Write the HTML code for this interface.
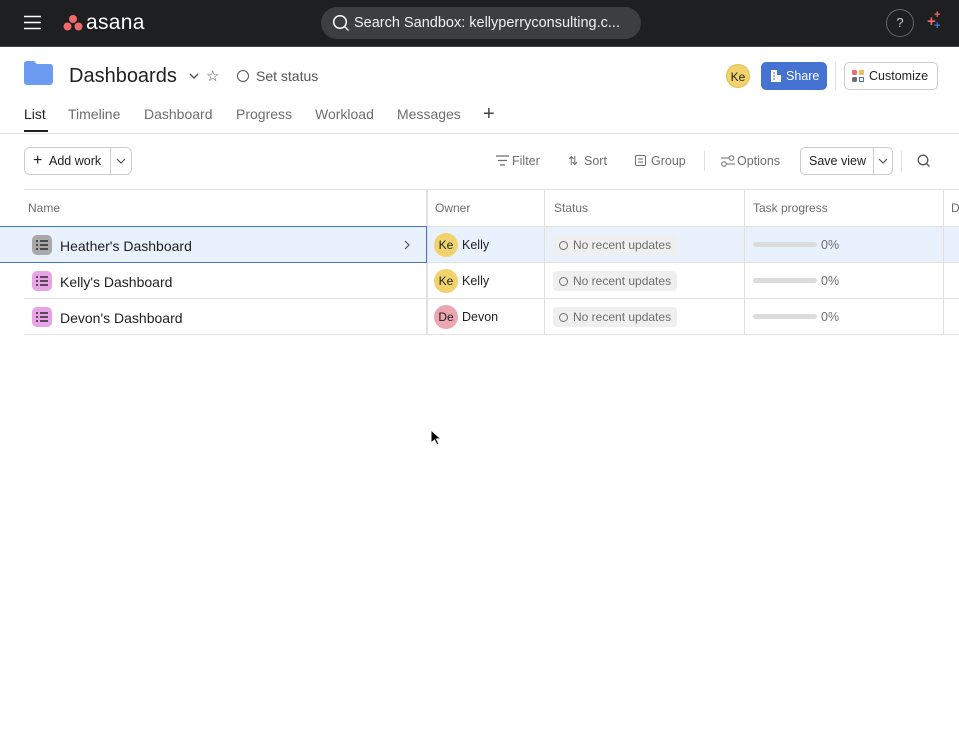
<!DOCTYPE html>
<html><head><meta charset="utf-8"><style>
*{box-sizing:border-box;margin:0;padding:0}
body{width:959px;height:754px;overflow:hidden;background:#fff;font-family:"Liberation Sans",sans-serif;color:#1e1f21;position:relative}
.abs{position:absolute}
.top{left:0;top:0;width:959px;height:47px;background:#1e1f21;border-bottom:1px solid #444}
.tab{top:106px;font-size:14px;color:#6d6e6f}
.hdr{top:201px;font-size:12px;color:#6d6e6f}
.vl{width:1px;background:#e0e0e0}
.hl{height:1px;background:#e0e0e0}
.av{width:24px;height:24px;border-radius:50%;font-size:12px;line-height:24px;text-align:center;color:#1e1f21}
.pill{height:20px;background:#efefef;border-radius:4px;font-size:12px;color:#6d6e6f;line-height:20px;padding:0 6px 0 6px}
.pill i{display:inline-block;width:9px;height:9px;border:1.3px solid #6d6e6f;border-radius:50%;margin-right:5px;vertical-align:-1px}
.bar{width:64px;height:5px;border-radius:3px;background:#dcdcdc}
.ic{width:20px;height:20px;border-radius:5px}
.tb{top:154px;font-size:12.5px;color:#6d6e6f}
</style></head><body>
<div class="abs top"></div>
<svg class="abs" style="left:24px;top:15px" width="17" height="15"><path d="M0 1.5h17M0 7.5h17M0 13.5h17" stroke="#fff" stroke-width="1.6"/></svg>
<svg class="abs" style="left:63px;top:14px" width="20" height="18"><circle cx="10" cy="5" r="4" fill="#f06a6a"/><circle cx="4.5" cy="12.5" r="4" fill="#f06a6a"/><circle cx="15.5" cy="12.5" r="4" fill="#f06a6a"/></svg>
<div class="abs" style="left:86px;top:11px;font-size:21px;color:#fff;letter-spacing:0.3px">asana</div>
<div class="abs" style="left:321px;top:7px;width:320px;height:32px;background:#3d3e40;border-radius:16px"></div>
<svg class="abs" style="left:332px;top:14px" width="18" height="18"><circle cx="8" cy="8" r="6.3" stroke="#fff" stroke-width="1.5" fill="none"/><path d="M12.5 12.5l4 4" stroke="#fff" stroke-width="1.5"/></svg>
<div class="abs" style="left:354px;top:15px;font-size:14.5px;color:#f0f0f0">Search Sandbox: kellyperryconsulting.c...</div>
<div class="abs" style="left:886px;top:9px;width:28px;height:28px;border:1px solid #666;border-radius:50%;color:#ccc;font-size:13px;text-align:center;line-height:26px">?</div>
<div class="abs" style="left:927px;top:14px;color:#f06a6a;font-size:15px;line-height:1;font-weight:bold">+</div>
<div class="abs" style="left:934px;top:10px;color:#f06a6a;font-size:11px;line-height:1;font-weight:bold">+</div>
<div class="abs" style="left:934px;top:21px;color:#4573d2;font-size:11px;line-height:1;font-weight:bold">+</div>

<svg class="abs" style="left:24px;top:61px" width="29" height="24"><path d="M0 3a3 3 0 0 1 3-3h7l3 3h13a3 3 0 0 1 3 3v15a3 3 0 0 1-3 3H3a3 3 0 0 1-3-3z" fill="#6d9bf1"/></svg>
<div class="abs" style="left:69px;top:65px;font-size:20px;font-weight:500">Dashboards</div>
<svg class="abs" style="left:189px;top:73px" width="10" height="7"><path d="M1 1l4 4 4-4" stroke="#555" stroke-width="1.4" fill="none"/></svg>
<div class="abs" style="left:206px;top:67px;font-size:15px;color:#555">☆</div>
<div class="abs" style="left:237px;top:70px;width:12px;height:12px;border:1.4px solid #555;border-radius:50%"></div>
<div class="abs" style="left:256px;top:68px;font-size:14px;color:#555">Set status</div>

<div class="abs av" style="left:726px;top:64px;background:#f1d26b;border:1px solid #e0c050">Ke</div>
<div class="abs" style="left:761px;top:62px;width:66px;height:28px;background:#4573d2;border-radius:5px;color:#fff;font-size:12.5px;line-height:28px;padding-left:25px">Share</div>
<svg class="abs" style="left:770px;top:70px" width="12" height="12"><path d="M1 0h6v12H1zM7 5h4v7H7z" fill="#fff"/><path d="M3 3h2M3 6h2M3 9h2" stroke="#4573d2"/></svg>
<div class="abs vl" style="left:835px;top:62px;height:28px"></div>
<div class="abs" style="left:844px;top:62px;width:94px;height:28px;border:1px solid #cfcbcb;border-radius:5px;font-size:12.5px;line-height:26px;padding-left:24px">Customize</div>
<svg class="abs" style="left:852px;top:70px" width="13" height="13"><rect x="0" y="0" width="5" height="5" rx="1.5" fill="#f06a6a"/><rect x="7" y="0" width="5" height="5" rx="1" fill="#e8c24f"/><rect x="0" y="7" width="5" height="5" rx="1.5" fill="#6d6e6f"/><rect x="7.5" y="7.5" width="4" height="4" fill="none" stroke="#4573d2"/></svg>

<div class="abs tab" style="left:24px;color:#1e1f21;font-weight:500">List</div>
<div class="abs" style="left:24px;top:130px;width:24px;height:2px;background:#1e1f21"></div>
<div class="abs tab" style="left:68px">Timeline</div>
<div class="abs tab" style="left:144px">Dashboard</div>
<div class="abs tab" style="left:236px">Progress</div>
<div class="abs tab" style="left:315px">Workload</div>
<div class="abs tab" style="left:397px">Messages</div>
<div class="abs" style="left:483px;top:103px;font-size:20px;color:#444">+</div>
<div class="abs hl" style="left:0;top:133px;width:959px"></div>

<div class="abs" style="left:24px;top:147px;width:108px;height:28px;border:1px solid #cfcbcb;border-radius:6px"></div>
<div class="abs vl" style="left:110px;top:148px;height:26px;background:#cfcbcb"></div>
<div class="abs" style="left:33px;top:152px;font-size:16px">+</div>
<div class="abs" style="left:49px;top:154px;font-size:12.5px">Add work</div>
<svg class="abs" style="left:116px;top:158px" width="10" height="6"><path d="M1 1l4 4 4-4" stroke="#555" stroke-width="1.2" fill="none"/></svg>

<svg class="abs" style="left:496px;top:155px" width="13" height="11"><path d="M0 1h13M2 5.5h9M4 10h5" stroke="#6d6e6f" stroke-width="1.2"/></svg>
<div class="abs tb" style="left:512px">Filter</div>
<div class="abs tb" style="left:568px;font-size:12px">⇅</div>
<div class="abs tb" style="left:584px">Sort</div>
<svg class="abs" style="left:635px;top:155px" width="11" height="11"><rect x=".5" y=".5" width="10" height="10" rx="1.5" fill="none" stroke="#6d6e6f"/><path d="M3 4h5M3 7h5" stroke="#6d6e6f"/></svg>
<div class="abs tb" style="left:651px">Group</div>
<div class="abs vl" style="left:704px;top:151px;height:20px"></div>
<svg class="abs" style="left:721px;top:155px" width="14" height="12"><circle cx="10.5" cy="3" r="2.3" fill="none" stroke="#6d6e6f"/><circle cx="3" cy="9" r="2.3" fill="none" stroke="#6d6e6f"/><path d="M0 3h8M5 9h9" stroke="#6d6e6f"/></svg>
<div class="abs tb" style="left:737px">Options</div>
<div class="abs" style="left:800px;top:147px;width:93px;height:28px;border:1px solid #cfcbcb;border-radius:5px"></div>
<div class="abs vl" style="left:873px;top:148px;height:26px;background:#cfcbcb"></div>
<div class="abs" style="left:809px;top:154px;font-size:12.5px">Save view</div>
<svg class="abs" style="left:878px;top:158px" width="10" height="6"><path d="M1 1l4 4 4-4" stroke="#555" stroke-width="1.2" fill="none"/></svg>
<div class="abs vl" style="left:901px;top:151px;height:20px"></div>
<svg class="abs" style="left:917px;top:154px" width="14" height="14"><circle cx="6" cy="6" r="4.8" stroke="#555" stroke-width="1.3" fill="none"/><path d="M9.5 9.5l3 3" stroke="#555" stroke-width="1.3"/></svg>

<!-- table -->
<div class="abs hl" style="left:24px;top:189px;width:935px"></div>
<div class="abs" style="left:0;top:227px;width:959px;height:35px;background:#e9f1fc"></div>
<div class="abs hl" style="left:427px;top:226px;width:532px"></div>
<div class="abs hl" style="left:24px;top:262px;width:935px"></div>
<div class="abs hl" style="left:24px;top:298px;width:935px"></div>
<div class="abs hl" style="left:24px;top:334px;width:935px"></div>
<div class="abs vl" style="left:426px;top:190px;height:144px;width:2px"></div>
<div class="abs vl" style="left:544px;top:190px;height:144px"></div>
<div class="abs vl" style="left:744px;top:190px;height:144px"></div>
<div class="abs vl" style="left:943px;top:190px;height:144px"></div>
<div class="abs" style="left:0;top:226px;width:427px;height:37px;border:1px solid #4573d2;border-left:none"></div>
<div class="abs hdr" style="left:28px">Name</div>
<div class="abs hdr" style="left:435px">Owner</div>
<div class="abs hdr" style="left:554px">Status</div>
<div class="abs hdr" style="left:753px">Task progress</div>
<div class="abs hdr" style="left:951px">D</div>

<div class="abs ic" style="left:32px;top:235px;background:#a8a8a8"></div>
<div class="abs ic" style="left:32px;top:271px;background:#e8a3e6"></div>
<div class="abs ic" style="left:32px;top:307px;background:#e8a3e6"></div>
<svg class="abs" style="left:36px;top:240px" width="12" height="10"><path d="M0 1h2M4 1h8M0 5h2M4 5h8M0 9h2M4 9h8" stroke="#2a2a2a" stroke-width="1.6"/></svg>
<svg class="abs" style="left:36px;top:276px" width="12" height="10"><path d="M0 1h2M4 1h8M0 5h2M4 5h8M0 9h2M4 9h8" stroke="#2a2a2a" stroke-width="1.6"/></svg>
<svg class="abs" style="left:36px;top:312px" width="12" height="10"><path d="M0 1h2M4 1h8M0 5h2M4 5h8M0 9h2M4 9h8" stroke="#2a2a2a" stroke-width="1.6"/></svg>
<div class="abs" style="left:60px;top:238px;font-size:14px">Heather's Dashboard</div>
<div class="abs" style="left:60px;top:274px;font-size:14px">Kelly's Dashboard</div>
<div class="abs" style="left:60px;top:310px;font-size:14px">Devon's Dashboard</div>
<svg class="abs" style="left:404px;top:240px" width="6" height="10"><path d="M1 1l4 4-4 4" stroke="#555" stroke-width="1.2" fill="none"/></svg>

<div class="abs av" style="left:434px;top:233px;background:#f1d26b">Ke</div>
<div class="abs av" style="left:434px;top:269px;background:#f1d26b">Ke</div>
<div class="abs av" style="left:434px;top:305px;background:#eba6b1">De</div>
<div class="abs" style="left:462px;top:238px;font-size:12.5px">Kelly</div>
<div class="abs" style="left:462px;top:274px;font-size:12.5px">Kelly</div>
<div class="abs" style="left:462px;top:310px;font-size:12.5px">Devon</div>

<div class="abs pill" style="left:553px;top:235px"><i></i>No recent updates</div>
<div class="abs pill" style="left:553px;top:271px"><i></i>No recent updates</div>
<div class="abs pill" style="left:553px;top:307px"><i></i>No recent updates</div>
<div class="abs bar" style="left:753px;top:242px"></div>
<div class="abs bar" style="left:753px;top:278px"></div>
<div class="abs bar" style="left:753px;top:314px"></div>
<div class="abs" style="left:821px;top:238px;font-size:12.5px;color:#6d6e6f">0%</div>
<div class="abs" style="left:821px;top:274px;font-size:12.5px;color:#6d6e6f">0%</div>
<div class="abs" style="left:821px;top:310px;font-size:12.5px;color:#6d6e6f">0%</div>

<svg class="abs" style="left:430px;top:429px" width="12" height="18"><path d="M1 1v13l3.5-3 2.5 5 2-1-2.5-5h4.5z" fill="#000" stroke="#fff" stroke-width="1"/></svg>
</body></html>
